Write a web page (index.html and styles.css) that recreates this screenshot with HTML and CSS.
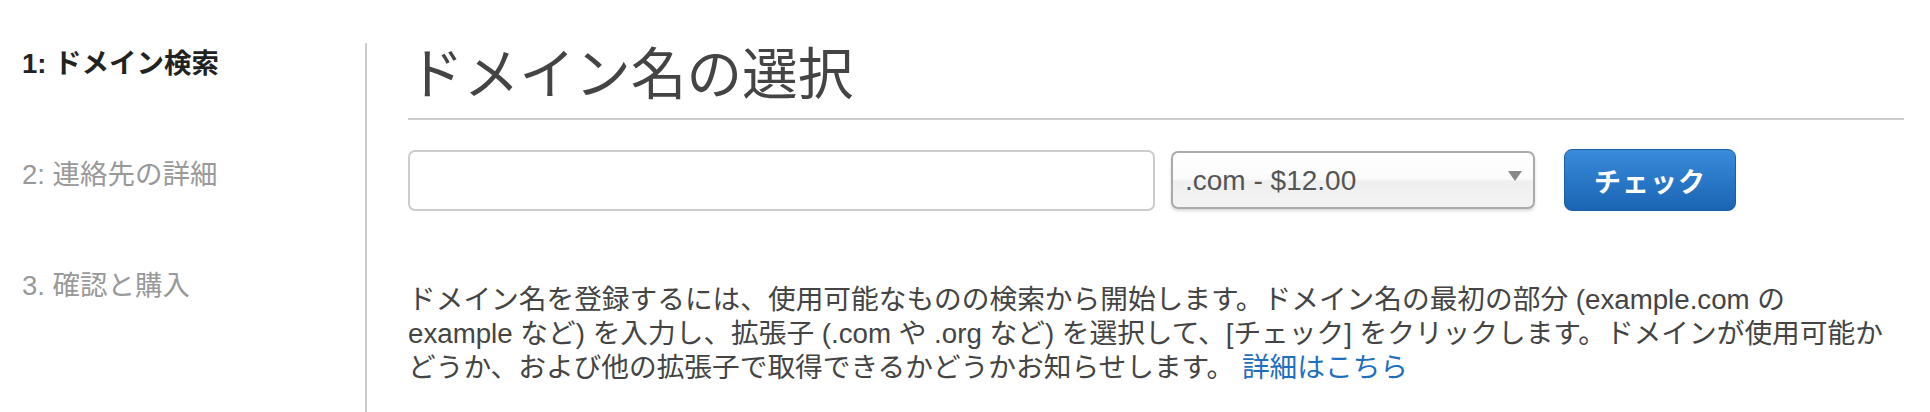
FILE: index.html
```html
<!DOCTYPE html>
<html lang="ja">
<head>
<meta charset="utf-8">
<title>ドメイン名の選択</title>
<link rel="stylesheet" href="styles.css">
</head>
<body>
<div class="layout">
  <nav class="steps">
    <div class="step step-active">1: ドメイン検索</div>
    <div class="step">2: 連絡先の詳細</div>
    <div class="step">3. 確認と購入</div>
  </nav>
  <main class="main">
    <h1 class="title">ドメイン名の選択</h1>
    <div class="search-row">
      <input class="domain-input" type="text" aria-label="ドメイン名">
      <span class="select-wrap">
        <select class="tld-select" aria-label="拡張子">
          <option>.com - $12.00</option>
        </select>
      </span>
      <button class="check-btn" type="button">チェック</button>
    </div>
    <p class="desc">ドメイン名を登録するには、使用可能なものの検索から開始します。ドメイン名の最初の部分 (example.com の example など) を入力し、拡張子 (.com や .org など) を選択して、[チェック] をクリックします。ドメインが使用可能かどうか、および他の拡張子で取得できるかどうかお知らせします。 <a class="more-link" href="#">詳細はこちら</a></p>
  </main>
</div>
</body>
</html>
```

FILE: styles.css
```css
html, body {
  margin: 0;
  padding: 0;
  background: #fff;
}

body {
  font-family: "Liberation Sans", "Noto Sans CJK JP", sans-serif;
  color: #444;
  overflow: hidden;
}

.layout {
  display: flex;
  margin-top: 43px;
  min-height: 369px;
}

.steps {
  width: 343px;
  padding-left: 22px;
  border-right: 2px solid #ccc;
  display: flex;
  flex-direction: column;
  gap: 77px;
  padding-top: 4px;
}

.step {
  font-size: 27.5px;
  line-height: 34px;
  color: #999;
  white-space: nowrap;
}

.step-active {
  color: #222;
  font-weight: bold;
}

.main {
  width: 1496px;
  padding-left: 41px;
}

.title {
  margin: 0;
  font-size: 55.7px;
  font-weight: normal;
  line-height: 65px;
  color: #444;
  padding-bottom: 10px;
  border-bottom: 2px solid #ccc;
}

.search-row {
  display: flex;
  align-items: center;
  margin-top: 29px;
  height: 62px;
}

.domain-input {
  box-sizing: border-box;
  width: 747px;
  height: 61px;
  border: 2px solid #ccc;
  border-radius: 7px;
  margin: 0;
  padding: 0 12px;
  font: inherit;
  font-size: 27px;
  background: #fff;
}

.select-wrap {
  position: relative;
  margin-left: 16px;
  display: flex;
}

.select-wrap::after {
  content: "";
  position: absolute;
  right: 13px;
  top: 20px;
  border-left: 7px solid transparent;
  border-right: 7px solid transparent;
  border-top: 10px solid #888;
  pointer-events: none;
}

.tld-select {
  appearance: none;
  -webkit-appearance: none;
  box-sizing: border-box;
  width: 364px;
  height: 58px;
  margin: 0;
  border: 2px solid #aaa;
  border-radius: 7px;
  padding: 0 40px 0 12px;
  font-family: "Liberation Sans", sans-serif;
  font-size: 28px;
  color: #555;
  background: linear-gradient(#ffffff 0%, #fbfbfb 48%, #efefef 52%, #f4f4f4 100%);
  box-shadow: 0 2px 3px rgba(0, 0, 0, 0.15);
}

.check-btn {
  box-sizing: border-box;
  margin-left: 29px;
  width: 172px;
  height: 62px;
  border: 1px solid #1b5ea6;
  border-radius: 8px;
  background: linear-gradient(#3a8bdc, #1a64b3);
  color: #fff;
  font-family: "Liberation Sans", "Noto Sans CJK JP", sans-serif;
  font-size: 27px;
  font-weight: bold;
  letter-spacing: 1px;
  padding: 0;
}

.desc {
  margin: 72px 0 0;
  max-width: 1483px;
  font-size: 27.7px;
  line-height: 34px;
  color: #444;
}

.more-link {
  color: #1f6fbf;
  text-decoration: none;
}
```
